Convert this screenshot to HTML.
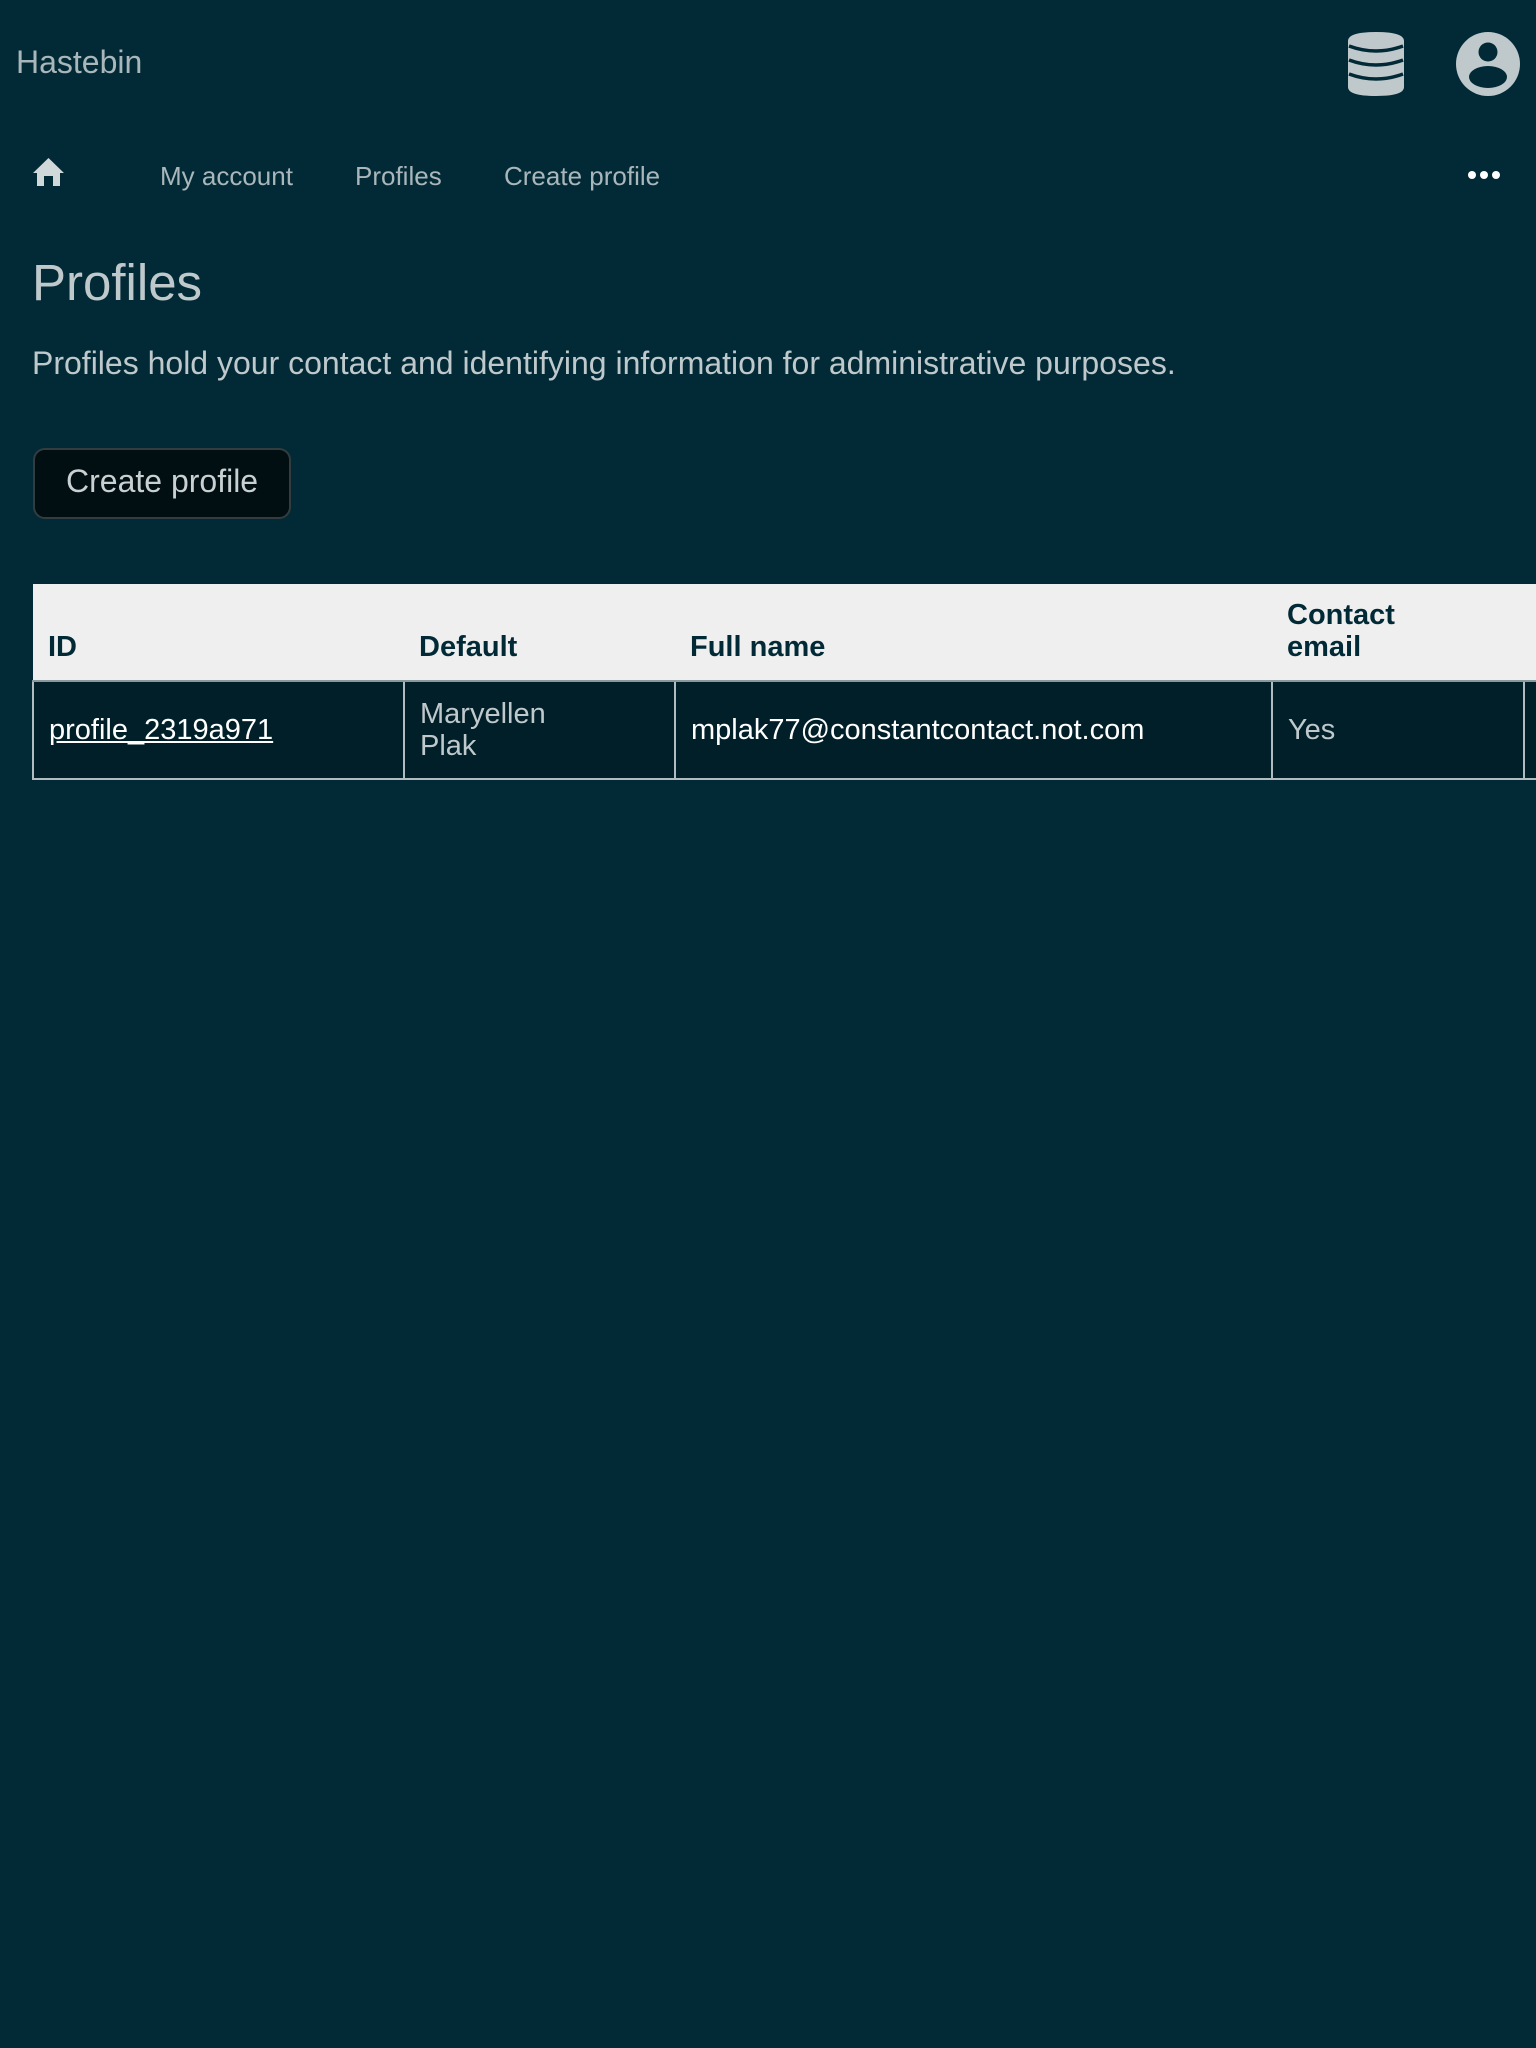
<!DOCTYPE html>
<html><head><meta charset="utf-8"><style>
html,body{margin:0;padding:0;}
body{width:1536px;height:2048px;background:#012a36;overflow:hidden;position:relative;font-family:"Liberation Sans",sans-serif;color:#bfc9cc;}
.a{position:absolute;white-space:nowrap;line-height:1;}
.nav{font-size:26px;color:#a9b6ba;top:163px;}
table{position:absolute;left:32px;top:584px;border-collapse:collapse;table-layout:fixed;width:1560px;font-size:29px;line-height:32px;}
th{background:#efefef;color:#012a36;font-weight:bold;text-align:left;vertical-align:bottom;padding:0 15px 17px 15px;height:79px;border-bottom:2px solid #8a999d;}
td{background:#011f29;border:2px solid #b0bcbf;border-top:none;padding:0 15px;height:96px;vertical-align:middle;color:#bfc9cc;}
td:first-child{border-left:2px solid #b0bcbf;}
</style></head><body>
<div class="a" style="left:16px;top:46px;font-size:32px;color:#a9b6ba;">Hastebin</div>
<svg class="a" style="left:1348px;top:32px" width="56" height="64" viewBox="0 0 56 64">
<path d="M0 9 Q0 0 28 0 Q56 0 56 9 V55 Q56 64 28 64 Q0 64 0 55Z" fill="#bfc9cc"/>
<path d="M1 14 Q28 24 55 14 M1 28 Q28 38 55 28 M1 42 Q28 52 55 42" stroke="#012a36" stroke-width="3.5" fill="none"/>
</svg>
<svg class="a" style="left:1456px;top:32px" width="64" height="64" viewBox="0 0 64 64">
<circle cx="32" cy="32" r="32" fill="#bfc9cc"/>
<circle cx="32" cy="20" r="9.5" fill="#012a36"/>
<ellipse cx="32" cy="45" rx="19" ry="11" fill="#012a36"/>
</svg>
<svg class="a" style="left:33px;top:158px" width="31" height="28" viewBox="0 0 31 28">
<path d="M15.5 0 L31 15 H27 V28 H20 V18 H11 V28 H4 V15 H0Z" fill="#d0d8da"/>
</svg>
<div class="a nav" style="left:160px;">My account</div>
<div class="a nav" style="left:355px;">Profiles</div>
<div class="a nav" style="left:504px;">Create profile</div>
<svg class="a" style="left:1467px;top:170px" width="34" height="10"><circle cx="5" cy="5" r="4" fill="#fff"/><circle cx="17" cy="5" r="4" fill="#fff"/><circle cx="29" cy="5" r="4" fill="#fff"/></svg>
<div class="a" style="left:32px;top:257px;font-size:51px;color:#bfc9cc;">Profiles</div>
<div class="a" style="left:32px;top:347px;font-size:32px;color:#bfc9cc;">Profiles hold your contact and identifying information for administrative purposes.</div>
<div class="a" style="left:33px;top:448px;width:254px;height:67px;background:#010e12;border:2px solid #333c3f;border-radius:12px;"></div>
<div class="a" style="left:66px;top:465px;font-size:32px;color:#c8d0d2;">Create profile</div>
<table>
<colgroup><col style="width:371px"><col style="width:271px"><col style="width:597px"><col style="width:252px"><col style="width:69px"></colgroup>
<tr><th>ID</th><th>Default</th><th>Full name</th><th>Contact<br>email</th><th></th></tr>
<tr><td><span style="color:#fff;text-decoration:underline;">profile_2319a971</span></td><td>Maryellen<br>Plak</td><td style="color:#fff">mplak77@constantcontact.not.com</td><td>Yes</td><td></td></tr>
</table>
</body></html>
